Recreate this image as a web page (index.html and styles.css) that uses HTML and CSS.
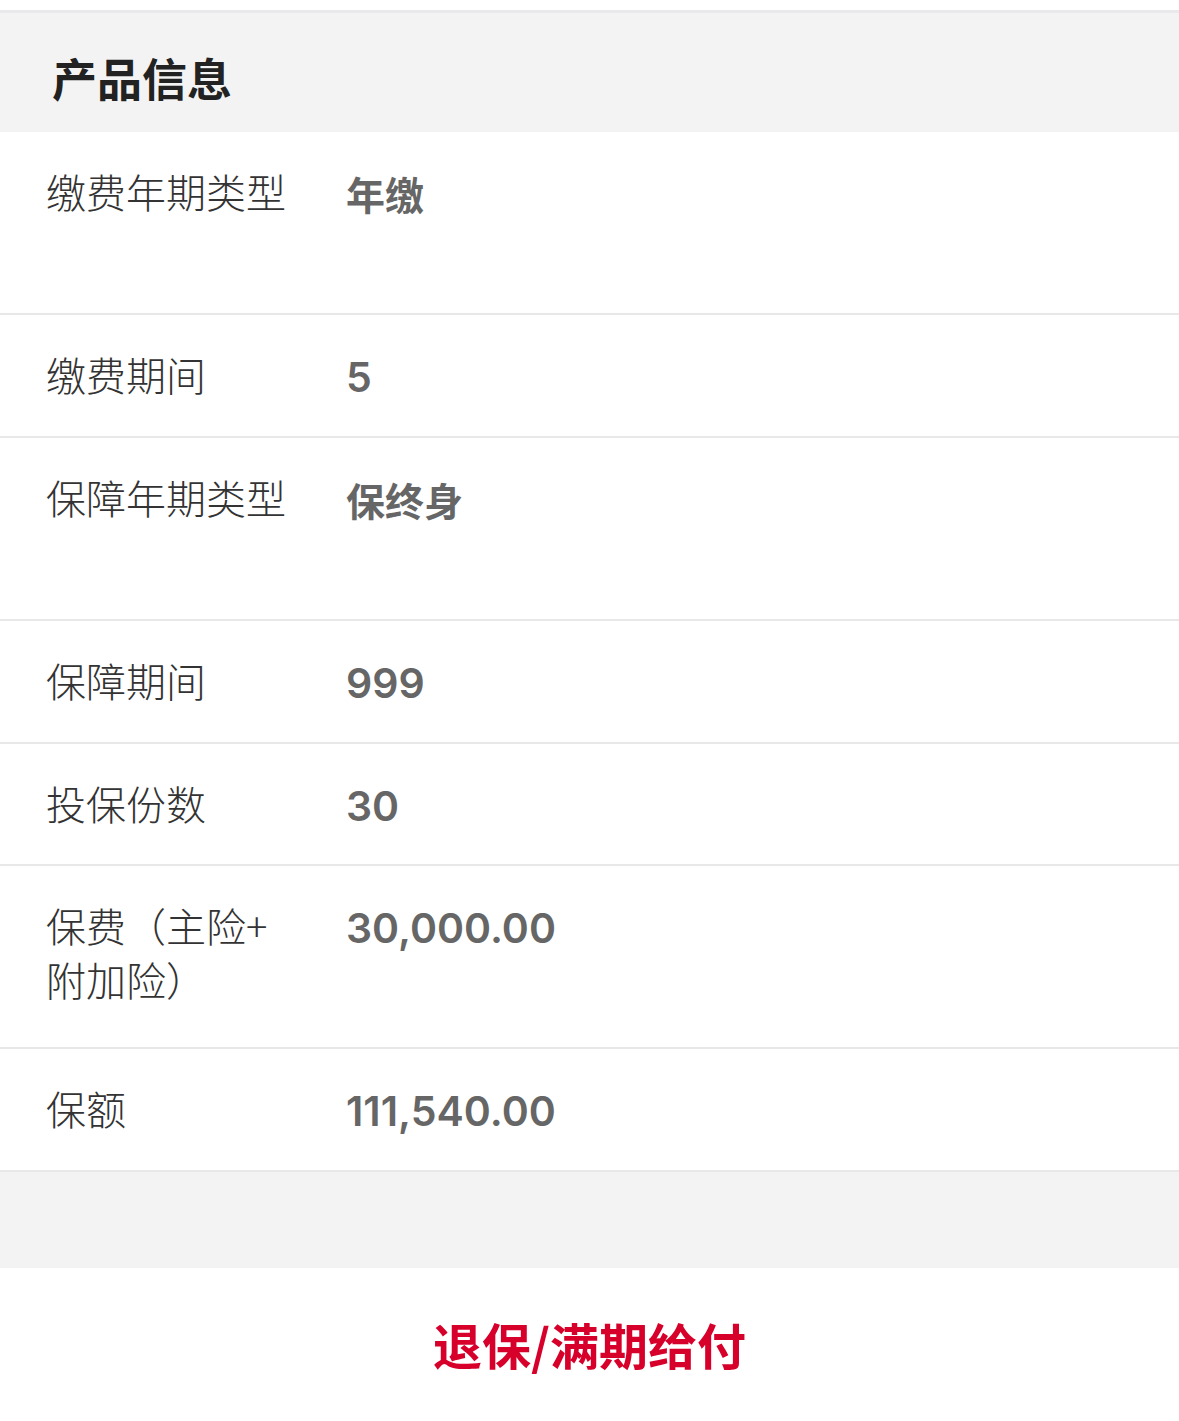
FILE: index.html
```html
<!DOCTYPE html>
<html lang="zh-CN">
<head>
<meta charset="utf-8">
<title>产品信息</title>
<link rel="stylesheet" href="styles.css">
</head>
<body>
<div class="page">
  <div class="top-gap"></div>
  <div class="section-head"><h2 class="section-title">产品信息</h2></div>
  <div class="list">
    <div class="row row-tall"><div class="label">缴费年期类型</div><div class="value value-cjk">年缴</div></div>
    <div class="row"><div class="label">缴费期间</div><div class="value">5</div></div>
    <div class="row row-tall"><div class="label">保障年期类型</div><div class="value value-cjk">保终身</div></div>
    <div class="row"><div class="label">保障期间</div><div class="value">999</div></div>
    <div class="row"><div class="label">投保份数</div><div class="value">30</div></div>
    <div class="row row-tall"><div class="label">保费（主险+<br>附加险）</div><div class="value">30,000.00</div></div>
    <div class="row"><div class="label">保额</div><div class="value">111,540.00</div></div>
  </div>
  <div class="spacer"></div>
  <div class="footer"><span class="action">退保/满期给付</span></div>
</div>
</body>
</html>
```

FILE: styles.css
```css
html, body {
  margin: 0;
  padding: 0;
  background: #ffffff;
}

body {
  font-family: "Noto Sans CJK SC", "Noto Sans", sans-serif;
  width: 1179px;
  height: 1421px;
  overflow: hidden;
}

.page {
  display: flex;
  flex-direction: column;
}

.top-gap {
  height: 10px;
  background: #ffffff;
  border-bottom: 3px solid #e9e9eb;
}

.section-head {
  height: 119px;
  background: #f3f3f3;
  box-sizing: border-box;
  padding: 35px 0 0 52px;
}

.section-title {
  margin: 0;
  font-size: 45px;
  line-height: 60px;
  font-weight: 700;
  color: #222222;
}

.list {
  display: flex;
  flex-direction: column;
}

.row {
  display: flex;
  flex-shrink: 0;
  height: 120.4px;
  box-sizing: content-box;
  border-bottom: 2px solid #e8e8e8;
  padding-left: 46px;
}

.row-tall {
  height: 181.4px;
}

.label {
  width: 300px;
  padding-top: 32px;
  font-size: 40px;
  line-height: 54px;
  font-weight: 300;
  color: #333333;
}

.value {
  padding-top: 35px;
  font-family: Inter, "Noto Sans CJK SC", sans-serif;
  font-size: 41px;
  line-height: 54px;
  font-weight: 600;
  color: #666666;
}

.value-cjk {
  padding-top: 34px;
  font-family: "Noto Sans CJK SC", sans-serif;
  font-size: 39px;
  font-weight: 700;
}

.spacer {
  height: 96px;
  background: #f3f3f3;
}

.footer {
  height: 153px;
  display: flex;
  align-items: center;
  justify-content: center;
  background: #ffffff;
}

.action {
  font-size: 49px;
  font-weight: 700;
  color: #d6002b;
  line-height: 60px;
}
```
